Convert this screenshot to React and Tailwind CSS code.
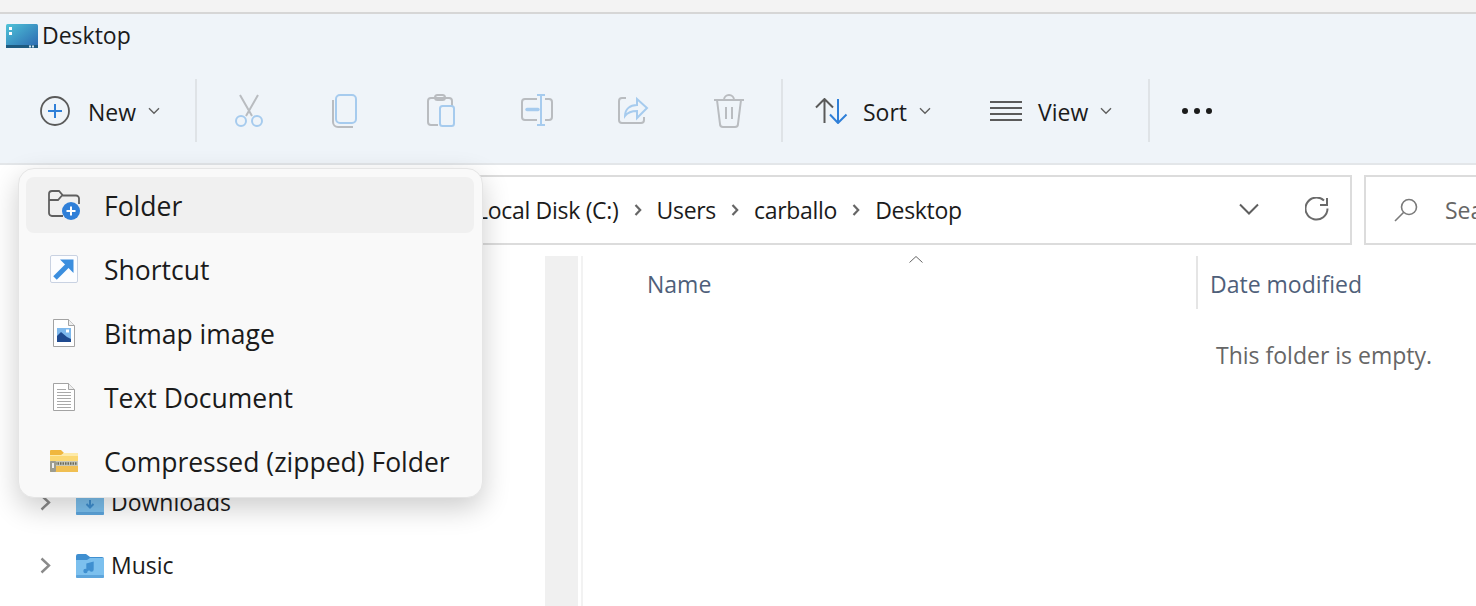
import React from "react";

const Chevron = ({ className = "" }) => (
  <svg viewBox="0 0 12 8" className={`w-[12px] h-[8px] ${className}`} fill="none" stroke="#5f5f5f" strokeWidth="1.4">
    <path d="M1 1.2 6 6.2 11 1.2" />
  </svg>
);

const Crumb = () => (
  <svg viewBox="0 0 8 14" className="w-[8px] h-[14px]" fill="none" stroke="#666" strokeWidth="2.2">
    <path d="M1.5 2 6.2 7 1.5 12" />
  </svg>
);

const TreeChevron = () => (
  <svg viewBox="0 0 11 17" className="w-[11px] h-[17px]" fill="none" stroke="#8a8a8a" strokeWidth="2.400">
    <path d="M1.500 1.500 9 8.500 1.500 15.500" />
  </svg>
);

const Sep = () => <div className="w-[2px] h-[63px] bg-[#dfe3e7]" />;

const CutIcon = () => (
  <svg viewBox="0 0 32 36" className="w-[32px] h-[36px]" fill="none" strokeWidth="2">
    <path d="M7 1 19 22M25 1 13 22" stroke="#b9bcc0" />
    <circle cx="8" cy="27" r="5" stroke="#a6cbee" />
    <circle cx="24" cy="27" r="5" stroke="#a6cbee" />
  </svg>
);

const CopyIcon = () => (
  <svg viewBox="0 0 28 34" className="w-[28px] h-[34px]" fill="none" strokeWidth="2">
    <path d="M2 6v22a5 5 0 0 0 5 5h15" stroke="#b9bcc0" />
    <rect x="5" y="1" width="20" height="28" rx="4" stroke="#a6cbee" />
  </svg>
);

const PasteIcon = () => (
  <svg viewBox="0 0 30 34" className="w-[30px] h-[34px]" fill="none" strokeWidth="2">
    <path d="M12 31H5a3 3 0 0 1-3-3V7a3 3 0 0 1 3-3h18a3 3 0 0 1 3 3v5" stroke="#b9bcc0" />
    <rect x="9" y="1" width="10" height="5" rx="2.5" stroke="#b9bcc0" />
    <rect x="14" y="12" width="14" height="20" rx="2.5" stroke="#a6cbee" />
  </svg>
);

const RenameIcon = () => (
  <svg viewBox="0 0 34 34" className="w-[34px] h-[34px]" fill="none" strokeWidth="2">
    <path d="M17 5H5a3 3 0 0 0-3 3v15a3 3 0 0 0 3 3h12M25 5h4a3 3 0 0 1 3 3v15a3 3 0 0 1-3 3h-4" stroke="#b9bcc0" />
    <path d="M21 1v30M17 1h8M17 31h8" stroke="#a6cbee" />
    <path d="M7 15.500h11" stroke="#a6cbee" strokeWidth="3.400" strokeLinecap="round" />
  </svg>
);

const ShareIcon = () => (
  <svg viewBox="0 0 32 32" className="w-[32px] h-[32px]" fill="none" strokeWidth="2">
    <path d="M9 4H5a3 3 0 0 0-3 3v19a3 3 0 0 0 3 3h19a3 3 0 0 0 3-3v-3" stroke="#b9bcc0" />
    <path d="M8 22c0-7 5-11 12-11V5l10 9-10 10v-7c-5 0-9 1-12 5Z" stroke="#a6cbee" fill="#eff4f9" />
  </svg>
);

const TrashIcon = () => (
  <svg viewBox="0 0 32 34" className="w-[32px] h-[34px]" fill="none" stroke="#b9bcc0" strokeWidth="2">
    <path d="M1 6h30M11 6a5 5 0 0 1 10 0M4 6l3 24a3 3 0 0 0 3 3h12a3 3 0 0 0 3-3l3-24M13 13v12M19 13v12" />
  </svg>
);

const SortIcon = () => (
  <svg viewBox="0 0 33 26" className="w-[33px] h-[26px]" fill="none" strokeWidth="2">
    <path d="M9.500 25V1M1 9.500 9.500 1 18 9.500" stroke="#5a5a5a" />
    <path d="M23 1v24M15 16.500 23 25l8.500-8.500" stroke="#2f7fd8" />
  </svg>
);

const ViewIcon = () => (
  <svg viewBox="0 0 32 20" className="w-[32px] h-[20px]" fill="none" stroke="#5a5a5a" strokeWidth="2">
    <path d="M0 1h32M0 7h32M0 13h32M0 19h32" />
  </svg>
);

const FolderPlus = () => (
  <svg viewBox="0 0 32 30" className="w-[32px] h-[30px]" fill="none">
    <path d="M15 26H4a3 3 0 0 1-3-3V4a3 3 0 0 1 3-3h7l4 4.500h13a3 3 0 0 1 3 3V14M1 10h9l4-4.500" stroke="#5f5f5f" strokeWidth="1.800" />
    <circle cx="23" cy="21" r="9" fill="#2f7fd8" />
    <path d="M23 16.500v9M18.500 21h9" stroke="#fff" strokeWidth="2" />
  </svg>
);

const ShortcutIcon = () => (
  <svg viewBox="0 0 28 28" className="w-[28px] h-[28px]" fill="none">
    <rect x="0.500" y="0.500" width="27" height="27" rx="1.500" fill="#fcfdff" stroke="#c9d2e2" />
    <path d="M5 23 20 8" stroke="#3b8ede" strokeWidth="5" />
    <path d="M10 4.500h13.500V18Z" fill="#3b8ede" />
  </svg>
);

const BitmapIcon = () => (
  <svg viewBox="0 0 22 28" className="w-[22px] h-[28px]">
    <path d="M.5.500h15l6 6v21H.5Z" fill="#fff" stroke="#a3a3a3" />
    <path d="M15.500.500v6h6" fill="#eee" stroke="#a3a3a3" />
    <rect x="4" y="9" width="14" height="14" fill="#7db8ec" />
    <rect x="13" y="10.500" width="3" height="3" fill="#fff" />
    <path d="M4 23v-6l4-4 6 5 4 2v3Z" fill="#1f4a8f" />
  </svg>
);

const TextDocIcon = () => (
  <svg viewBox="0 0 22 28" className="w-[22px] h-[28px]" fill="none">
    <path d="M.5.500h15l6 6v21H.5Z" fill="#fff" stroke="#a3a3a3" />
    <path d="M15.500.500v6h6" fill="#eee" stroke="#a3a3a3" />
    <path d="M4 6.500h9M4 9.500h14M4 12.500h14M4 15.500h14M4 18.500h14M4 21.500h14M4 24.500h14" stroke="#a9a9a9" />
  </svg>
);

const ZipIcon = () => (
  <svg viewBox="0 0 28 24" className="w-[28px] h-[24px]">
    <path d="M0 2a1 1 0 0 1 1-1h10l3 3-3 3H0Z" fill="#f0b73e" />
    <path d="M0 6h28v17H0Z" fill="#fbd873" />
    <path d="M0 6h11l3-2h14v3H0Z" fill="#fdeaa8" />
    <rect y="12" width="28" height="5" fill="#c7c7b8" />
    <path d="M5 14.500h22" stroke="#6b6b5c" strokeWidth="2.500" strokeDasharray="1.500 1" />
    <rect y="17" width="28" height="6" fill="#f0bf52" />
    <rect x="0" y="12" width="6" height="11" rx="1" fill="#9c9c90" />
    <rect x="2" y="14" width="2" height="5" fill="#eee" />
  </svg>
);

const DesktopIcon = () => (
  <svg viewBox="0 0 32 24" className="w-[32px] h-[24px]">
    <defs>
      <linearGradient id="desk" x1="0" y1="0" x2="1" y2="1">
        <stop offset="0" stopColor="#4fc3d8" />
        <stop offset="1" stopColor="#2a66b0" />
      </linearGradient>
    </defs>
    <rect width="32" height="24" rx="1.500" fill="url(#desk)" />
    <rect y="21" width="32" height="3" fill="#1d5a80" />
    <rect x="3" y="3" width="3" height="3" fill="#fff" />
    <rect x="3" y="8" width="3" height="3" fill="#fff" />
    <rect x="23" y="21.500" width="2" height="2" fill="#cfe3f2" />
    <rect x="26" y="21.500" width="2" height="2" fill="#cfe3f2" />
  </svg>
);

const BlueFolder = ({ glyph }) => (
  <svg viewBox="0 0 28 26" className="w-[28px] h-[26px]">
    <path d="M0 3a2 2 0 0 1 2-2h8l4 3h12a2 2 0 0 1 2 2v4H0Z" fill="#3f8fd0" />
    <path d="M0 7h11l3-2h14v18a2 2 0 0 1-2 2H2a2 2 0 0 1-2-2Z" fill="#7cc0ee" />
    <rect y="22" width="28" height="3" rx="1" fill="#5da5dc" />
    {glyph}
  </svg>
);

const tools = [
  [CutIcon, "cut"],
  [CopyIcon, "copy"],
  [PasteIcon, "paste"],
  [RenameIcon, "rename"],
  [ShareIcon, "share"],
  [TrashIcon, "delete"],
];

const menuItems = [
  ["Folder", FolderPlus],
  ["Shortcut", ShortcutIcon],
  ["Bitmap image", BitmapIcon],
  ["Text Document", TextDocIcon],
  ["Compressed (zipped) Folder", ZipIcon],
];

const crumbs = ["Local Disk (C:)", "Users", "carballo", "Desktop"];

export default function App() {
  return (
    <div className="relative w-screen h-screen overflow-hidden bg-white text-[#1b1b1b] text-[23px] font-['Open_Sans',sans-serif]">
      <div className="h-[14px] bg-[#f3f3f3] border-b-2 border-[#d6d6d6]" />

      {/* title + command bar */}
      <div className="bg-[#eff4f9] border-b-2 border-[#e3e6e9] h-[151px]">
        <div className="h-[44px] flex items-center pl-[6px] gap-[4px]">
          <DesktopIcon />
          <span className="pb-[1px]">Desktop</span>
        </div>
        <div className="flex items-center h-[63px] mt-[21px]">
          <div className="w-[195px] flex items-center pl-[40px]">
            <svg viewBox="0 0 30 30" className="w-[30px] h-[30px]" fill="none">
              <circle cx="15" cy="15" r="14" stroke="#5a5a5a" strokeWidth="1.800" />
              <path d="M15 8v14M8 15h14" stroke="#2f7fd8" strokeWidth="2" />
            </svg>
            <span className="ml-[18px] pt-[3px]">New</span>
            <Chevron className="ml-[12px]" />
          </div>
          <Sep />
          <div className="flex ml-[4px] pt-[2px]">
            {tools.map(([Icon, key]) => (
              <div key={key} className="w-[96px] flex justify-center">
                <Icon />
              </div>
            ))}
          </div>
          <div className="ml-[4px]"><Sep /></div>
          <div className="w-[207px] flex items-center pl-[32px]">
            <SortIcon />
            <span className="ml-[15px] pt-[3px]">Sort</span>
            <Chevron className="ml-[12px]" />
          </div>
          <div className="w-[158px] flex items-center">
            <ViewIcon />
            <span className="ml-[16px] pt-[3px]">View</span>
            <Chevron className="ml-[12px]" />
          </div>
          <Sep />
          <div className="flex gap-[6px] ml-[32px]">
            <span className="w-[6px] h-[6px] rounded-full bg-[#1b1b1b]" />
            <span className="w-[6px] h-[6px] rounded-full bg-[#1b1b1b]" />
            <span className="w-[6px] h-[6px] rounded-full bg-[#1b1b1b]" />
          </div>
        </div>
      </div>

      {/* address row */}
      <div className="flex h-[70px] mt-[10px] gap-[12px] pl-[100px]">
        <div className="w-[1252px] border-2 border-[#dcdcdc] flex items-center pl-[374px] tracking-[-0.3px]">
          {crumbs.map((c, i) => (
            <React.Fragment key={c}>
              <span>{c}</span>
              {i < crumbs.length - 1 && <span className="mx-[15px] flex"><Crumb /></span>}
            </React.Fragment>
          ))}
          <div className="ml-auto flex items-center pr-[21px] pb-[2px] gap-[46px]">
            <svg viewBox="0 0 20 12" className="w-[20px] h-[12px]" fill="none" stroke="#5f5f5f" strokeWidth="2"><path d="M1 1.500 10 10.500 19 1.500" /></svg>
            <svg viewBox="0 0 24 24" className="w-[24px] h-[24px]" fill="none" stroke="#6a6a6a" strokeWidth="2"><path d="M19 3.500a11 11 0 1 0 3.500 8" /><path d="M22 1v7h-7" /></svg>
          </div>
        </div>
        <div className="flex-1 border-2 border-r-0 border-[#dcdcdc] flex items-center pl-[28px] overflow-hidden">
          <svg viewBox="0 0 24 24" className="w-[24px] h-[24px] shrink-0" fill="none" stroke="#7a7a7a" strokeWidth="1.600"><circle cx="15" cy="9" r="7.500" /><path d="M9.500 14.500 1 23" /></svg>
          <span className="ml-[27px] text-[#666]">Search</span>
        </div>
      </div>

      {/* body */}
      <div className="flex h-[361px]">
        <div className="w-[545px] pt-[226px] pl-[40px]">
          <div className="h-[63px] flex items-center">
            <TreeChevron />
            <span className="ml-[25px]"><BlueFolder glyph={<path d="M14 10v7M10.500 14l3.500 3.500 3.500-3.500" stroke="#3f8fd0" strokeWidth="2" fill="none" />} /></span>
            <span className="ml-[7px]">Downloads</span>
          </div>
          <div className="h-[63px] flex items-center">
            <TreeChevron />
            <span className="ml-[25px]"><BlueFolder glyph={<path d="M11 18v-7l6-1.500v7M11 18a1.500 1.500 0 1 1-3 0 1.500 1.500 0 0 1 3 0ZM17 16.500a1.500 1.500 0 1 1-3 0 1.500 1.500 0 0 1 3 0Z" stroke="#3f8fd0" strokeWidth="1.400" fill="#3f8fd0" />} /></span>
            <span className="ml-[7px]">Music</span>
          </div>
        </div>
        <div className="w-[33px] h-full mt-[11px] bg-[#f0f0f0]" />
        <div className="w-[2px] h-full mt-[11px] ml-[3px] bg-[#f2f2f2]" />
        <div className="flex-1 pt-[11px]">
          <div className="flex h-[53px] text-[#4f5f7a]">
            <div className="relative w-[613px] pl-[64px] pt-[11px]">
              Name
              <svg viewBox="0 0 14 7" className="absolute left-[326px] top-[0px] w-[14px] h-[7px]" fill="none" stroke="#666"><path d="M.5 6.500 7 .5l6.500 6" /></svg>
            </div>
            <div className="border-l-2 border-[#e5e5e5] pl-[12px] pt-[11px]">Date modified</div>
          </div>
          <div className="pl-[633px] pt-[29px] text-[#666]">This folder is empty.</div>
        </div>
      </div>

      {/* New menu */}
      <div className="absolute left-[18px] top-[168px] w-[465px] flex flex-col gap-[8px] pl-[7px] pr-[8px] py-[8px] text-[26.5px] bg-[#f9f9f9] border border-[#e5e5e5] rounded-[16px] shadow-[0_10px_28px_rgba(0,0,0,0.2)]">
        {menuItems.map(([label, Icon], i) => (
          <div key={label} className={`h-[56px] flex items-center pl-[22px] rounded-[8px] ${i === 0 ? "bg-[#f0f0f0]" : ""}`}>
            <div className="w-[32px] flex justify-center"><Icon /></div>
            <span className="ml-[24px] pt-[4px] whitespace-nowrap">{label}</span>
          </div>
        ))}
      </div>
    </div>
  );
}
